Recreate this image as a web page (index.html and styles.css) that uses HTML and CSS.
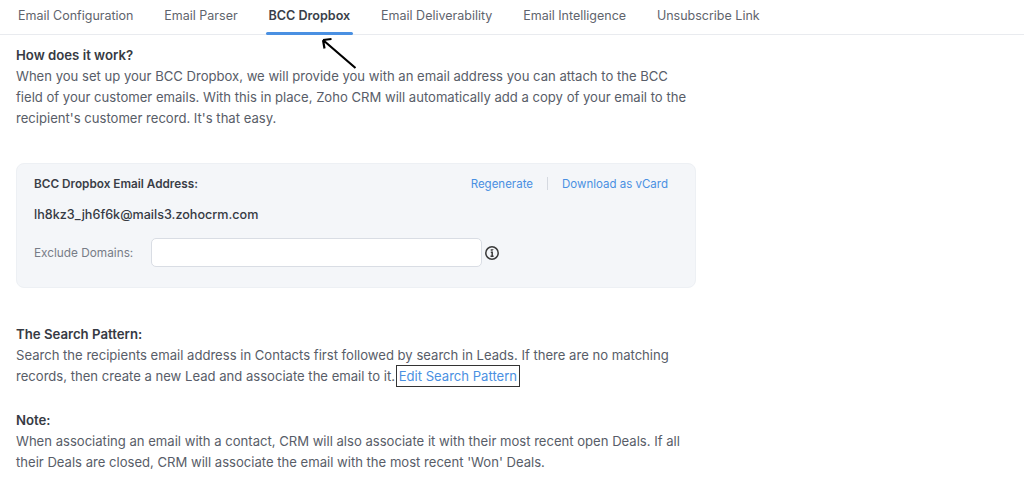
FILE: index.html
```html
<!DOCTYPE html>
<html lang="en">
<head>
<meta charset="utf-8">
<title>BCC Dropbox</title>
<link rel="stylesheet" href="styles.css">
</head>
<body>
<nav class="tabs">
  <a class="tab">Email Configuration</a>
  <a class="tab">Email Parser</a>
  <a class="tab active">BCC Dropbox</a>
  <a class="tab">Email Deliverability</a>
  <a class="tab">Email Intelligence</a>
  <a class="tab">Unsubscribe Link</a>
</nav>
<svg class="arrow" width="40" height="34" viewBox="0 0 40 34"><path d="M35.500 32L3 4M3 4L4.500 12.500M3 4L11.500 3" fill="none" stroke="#000" stroke-width="2.200"/></svg>
<main class="content">
  <section class="block">
    <h2>How does it work?</h2>
    <p>When you set up your BCC Dropbox, we will provide you with an email address you can attach to the BCC field of your customer emails. With this in place, Zoho CRM will automatically add a copy of your email to the recipient's customer record. It's that easy.</p>
  </section>
  <section class="card">
    <div class="card-head">
      <strong>BCC Dropbox Email Address:</strong>
      <div class="actions"><a>Regenerate</a><span class="sep"></span><a>Download as vCard</a></div>
    </div>
    <div class="address">lh8kz3_jh6f6k@mails3.zohocrm.com</div>
    <div class="field">
      <label for="domains">Exclude Domains:</label>
      <input id="domains" type="text">
      <svg class="info" width="16" height="16" viewBox="0 0 16 16"><circle cx="8" cy="8" r="6.200" fill="none" stroke="#3a3a3a" stroke-width="1.500"/><path d="M6.700 5h2v.1M6.800 7.200h1.400v4M6.500 11.200h3.100" fill="none" stroke="#3a3a3a" stroke-width="1.500"/></svg>
    </div>
  </section>
  <section class="block search">
    <h2>The Search Pattern:</h2>
    <p>Search the recipients email address in Contacts first followed by search in Leads. If there are no matching records, then create a new Lead and associate the email to it. <a class="focus">Edit Search Pattern</a></p>
  </section>
  <section class="block note">
    <h2>Note:</h2>
    <p>When associating an email with a contact, CRM will also associate it with their most recent open Deals. If all their Deals are closed, CRM will associate the email with the most recent 'Won' Deals.</p>
  </section>
</main>
</body>
</html>
```
FILE: styles.css
```css
* { box-sizing: border-box; }
html, body { margin: 0; padding: 0; }
body {
  width: 1024px;
  height: 487px;
  overflow: hidden;
  background: #fff;
  font-family: Inter, "Liberation Sans", sans-serif;
  font-size: 13px;
  color: #585d68;
  position: relative;
}
.tabs {
  display: flex;
  height: 35px;
  padding-left: 18px;
  gap: 30.800px;
  border-bottom: 1px solid #e9ebef;
}
.tab {
  height: 35px;
  line-height: 31px;
  font-size: 12.500px;
  color: #5f646d;
  position: relative;
  white-space: nowrap;
}
.tab.active {
  color: #3a3f49;
  font-weight: 600;
  font-size: 12.600px;
}
.tab.active::after {
  content: "";
  position: absolute;
  left: -2px;
  right: -3px;
  bottom: 0;
  height: 3px;
  border-radius: 2px;
  background: #4a90e2;
}
.arrow { position: absolute; left: 320px; top: 36px; }
.content { padding-left: 16px; width: 692px; }
h2 {
  margin: 0;
  font-size: 13.200px;
  line-height: 21px;
  font-weight: 600;
  color: #363a43;
}
p { margin: 0; line-height: 21px; font-size: 13.080px; }
.block { padding-top: 10px; }
.card {
  margin-top: 34px;
  height: 125px;
  background: #f4f6f9;
  border: 1px solid #edf0f4;
  border-radius: 8px;
  padding: 11px 27px 0 17px;
  width: 680px;
}
.card-head {
  display: flex;
  justify-content: space-between;
  align-items: center;
  height: 17px;
  font-size: 11.700px;
}
.card-head strong { font-weight: 600; color: #3a3e47; font-size: 11.750px; }
.actions { display: flex; align-items: center; color: #4a90e2; font-size: 11.500px; }
.sep { width: 1px; height: 13px; background: #d5d9e0; margin: 0 14px; }
.address {
  margin-top: 14px;
  font-size: 12.600px;
  line-height: 17px;
  font-weight: 500;
  color: #363a43;
}
.field { display: flex; align-items: center; margin-top: 15px; }
.field label { width: 117px; font-size: 11.800px; color: #777c87; }
.field input {
  width: 331px;
  height: 29px;
  border: 1px solid #d9dde4;
  border-radius: 5px;
  background: #fff;
}
.info { margin-left: 2px; }
.search { padding-top: 36px; }
.note { padding-top: 23px; }
.focus {
  color: #4a90e2;
  outline: 1px solid #333;
  outline-offset: 2px;
}
```
